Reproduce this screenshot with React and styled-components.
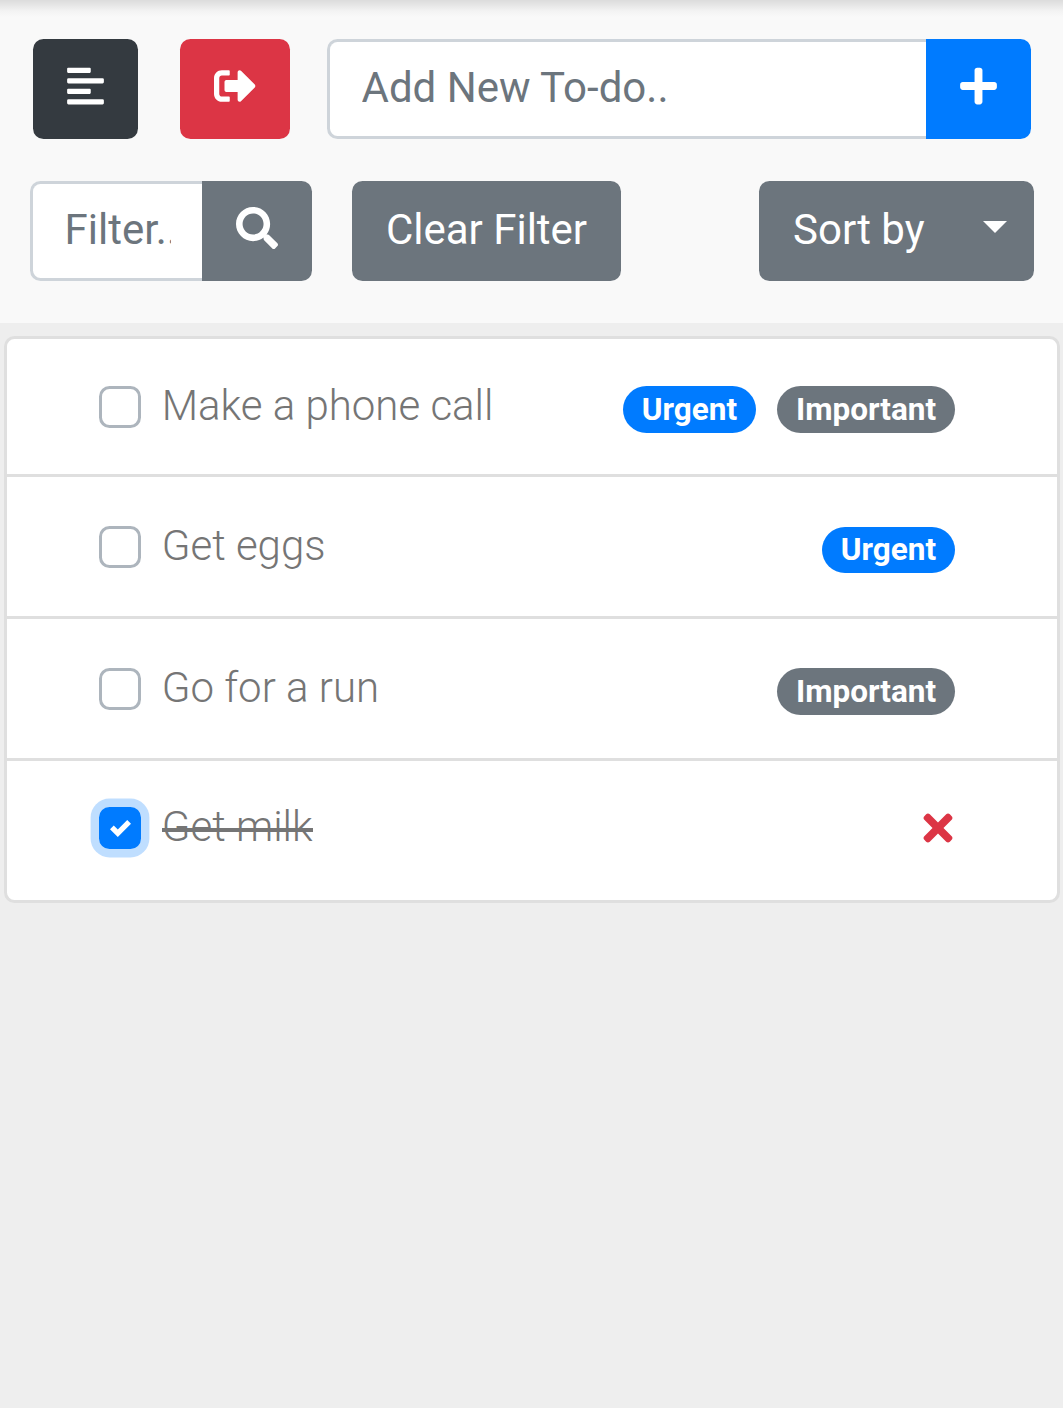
import React, { useState } from "react";
import styled, { createGlobalStyle, css } from "styled-components";
import { FaAlignLeft, FaSignOutAlt, FaPlus, FaSearch, FaTimes } from "react-icons/fa";

const colors = {
  dark: "#343a40",
  danger: "#dc3545",
  primary: "#007bff",
  secondary: "#6c757d",
};

const GlobalStyle = createGlobalStyle`
  *, *::before, *::after { box-sizing: border-box; }
  body {
    margin: 0;
    background: #eee;
    color: #757575;
    font-family: Roboto, "Noto Sans", sans-serif;
    font-size: 42px;
    line-height: 1.5;
  }
`;

const Page = styled.main`
  min-height: 1408px;
  overflow: hidden;
`;

const Toolbar = styled.header`
  height: 323px;
  padding: 39px 29px 0 30px;
  display: flex;
  flex-direction: column;
  gap: 42px;
  background: linear-gradient(#dcdcdc, #e6e6e6 5px, #f3f3f3 11px, #f9f9f9 17px) no-repeat top / 100% 17px #f9f9f9;
`;

const ToolRow = styled.div`
  display: flex;
  height: 100px;
`;

const Button = styled.button`
  display: flex;
  align-items: center;
  justify-content: center;
  flex: none;
  width: ${(p) => p.$width}px;
  height: 100px;
  margin: 0 0 0 ${(p) => p.$gap || 0}px;
  padding: 0 0 4px;
  border: 0;
  border-radius: ${(p) => (p.$attached ? "0 10.5px 10.5px 0" : "10.5px")};
  background: ${(p) => colors[p.$tone]};
  color: #fff;
  font: inherit;
  white-space: nowrap;

  svg {
    display: block;
    flex: none;
    height: 42px;
    width: ${(p) => p.$icon || 42}px;
    margin-bottom: 1.4px;
  }
`;

const SortButton = styled(Button)`
  justify-content: space-between;
  margin-left: auto;
  padding: 0 27.5px 4px 34px;
`;

const Caret = styled.span`
  border: 12.5px solid transparent;
  border-top-color: #fff;
  border-bottom: 0;
  margin-bottom: 4px;
`;

const InputGroup = styled.div`
  display: flex;
  flex: none;
  width: ${(p) => p.$width}px;
  margin-left: ${(p) => p.$gap || 0}px;
`;

const TextInput = styled.input`
  flex: 1;
  min-width: 0;
  height: 100px;
  padding: 0 31.5px 4px;
  border: 3px solid #ced4da;
  border-right: 0;
  border-radius: 10.5px 0 0 10.5px;
  background: #fff;
  font: inherit;
  outline: 0;

  &::placeholder {
    color: ${colors.secondary};
    opacity: 1;
  }
`;

const List = styled.ul`
  margin: 13px 3px 0 4px;
  padding: 0;
  list-style: none;
  background: #fff;
  border: 3px solid #dfdfdf;
  border-radius: 10.5px;
`;

const Item = styled.li`
  display: flex;
  align-items: flex-start;
  height: ${(p) => p.$height}px;
  padding: ${(p) => p.$top}px 102px 0 92px;

  & + & {
    border-top: 3px solid #dfdfdf;
  }
`;

const Check = styled.button`
  display: flex;
  align-items: center;
  justify-content: center;
  flex: none;
  width: 42px;
  height: 42px;
  padding: 0;
  border: 3px solid #adb5bd;
  border-radius: 10.5px;
  background: #fff;

  ${(p) =>
    p.$checked &&
    css`
      border-color: ${colors.primary};
      background: ${colors.primary};
      box-shadow: 0 0 0 8.4px rgba(0, 123, 255, 0.25);
    `}

  svg {
    width: 21px;
    height: 21px;
  }
`;

const Label = styled.span`
  position: relative;
  margin: -12px auto 0 20.7px;
  font-weight: 300;

  ${(p) =>
    p.$done &&
    css`
      &::after {
        content: "";
        position: absolute;
        top: 33px;
        left: 0;
        right: 0;
        height: 4px;
        background: currentColor;
      }
    `}
`;

const Tags = styled.div`
  display: flex;
  gap: 21px;
`;

const Badge = styled.span`
  height: ${(p) => p.$height}px;
  margin-top: ${(p) => 47 - p.$height}px;
  padding: 0 18.9px;
  border-radius: 24px;
  background: ${(p) => colors[p.$tone]};
  color: #fff;
  font-size: 31.5px;
  font-weight: 700;
  line-height: ${(p) => p.$height * 2 - 46}px;
`;

const DeleteButton = styled.button`
  padding: 0;
  border: 0;
  margin-right: 2px;
  background: none;
  color: ${colors.danger};

  svg {
    display: block;
    width: 30px;
    height: 42px;
  }
`;

const tagTones = { Urgent: "primary", Important: "secondary" };

const initialTodos = [
  { text: "Make a phone call", tags: ["Urgent", "Important"], height: 135, top: 47, badge: 47 },
  { text: "Get eggs", tags: ["Urgent"], height: 142, top: 49, badge: 46 },
  { text: "Go for a run", tags: ["Important"], height: 142, top: 49, badge: 47 },
  { text: "Get milk", tags: [], done: true, height: 142, top: 46, badge: 47 },
];

function Todo({ todo, onToggle, onDelete }) {
  return (
    <Item $height={todo.height} $top={todo.top}>
      <Check $checked={todo.done} onClick={onToggle} aria-label={todo.text}>
        {todo.done && (
          <svg viewBox="0 0 8 8" fill="#fff">
            <path d="M6.564.75l-3.59 3.612-1.538-1.55L0 4.26 2.974 7.25 8 2.193z" />
          </svg>
        )}
      </Check>
      <Label $done={todo.done}>{todo.text}</Label>
      {todo.done ? (
        <DeleteButton onClick={onDelete} aria-label="Delete">
          <FaTimes />
        </DeleteButton>
      ) : (
        <Tags>
          {todo.tags.map((tag) => (
            <Badge key={tag} $tone={tagTones[tag]} $height={todo.badge}>{tag}</Badge>
          ))}
        </Tags>
      )}
    </Item>
  );
}

export default function App() {
  const [todos, setTodos] = useState(initialTodos);
  const toggle = (text) =>
    setTodos(todos.map((t) => (t.text === text ? { ...t, done: !t.done } : t)));
  const remove = (text) => setTodos(todos.filter((t) => t.text !== text));

  return (
    <Page>
      <GlobalStyle />
      <Toolbar>
        <ToolRow>
          <Button $tone="dark" $width={105} $gap={3} $icon={37} aria-label="Menu"><FaAlignLeft /></Button>
          <Button $tone="danger" $width={110} $gap={42} aria-label="Log out"><FaSignOutAlt /></Button>
          <InputGroup $width={704} $gap={37}>
            <TextInput placeholder="Add New To-do.." />
            <Button $tone="primary" $width={105} $icon={37} $attached aria-label="Add"><FaPlus /></Button>
          </InputGroup>
        </ToolRow>
        <ToolRow>
          <InputGroup $width={282}>
            <TextInput placeholder="Filter.." />
            <Button $tone="secondary" $width={110} $attached aria-label="Search"><FaSearch /></Button>
          </InputGroup>
          <Button $tone="secondary" $width={269} $gap={40}>Clear Filter</Button>
          <SortButton $tone="secondary" $width={275}>
            Sort by
            <Caret />
          </SortButton>
        </ToolRow>
      </Toolbar>
      <List>
        {todos.map((todo) => (
          <Todo
            key={todo.text}
            todo={todo}
            onToggle={() => toggle(todo.text)}
            onDelete={() => remove(todo.text)}
          />
        ))}
      </List>
    </Page>
  );
}
